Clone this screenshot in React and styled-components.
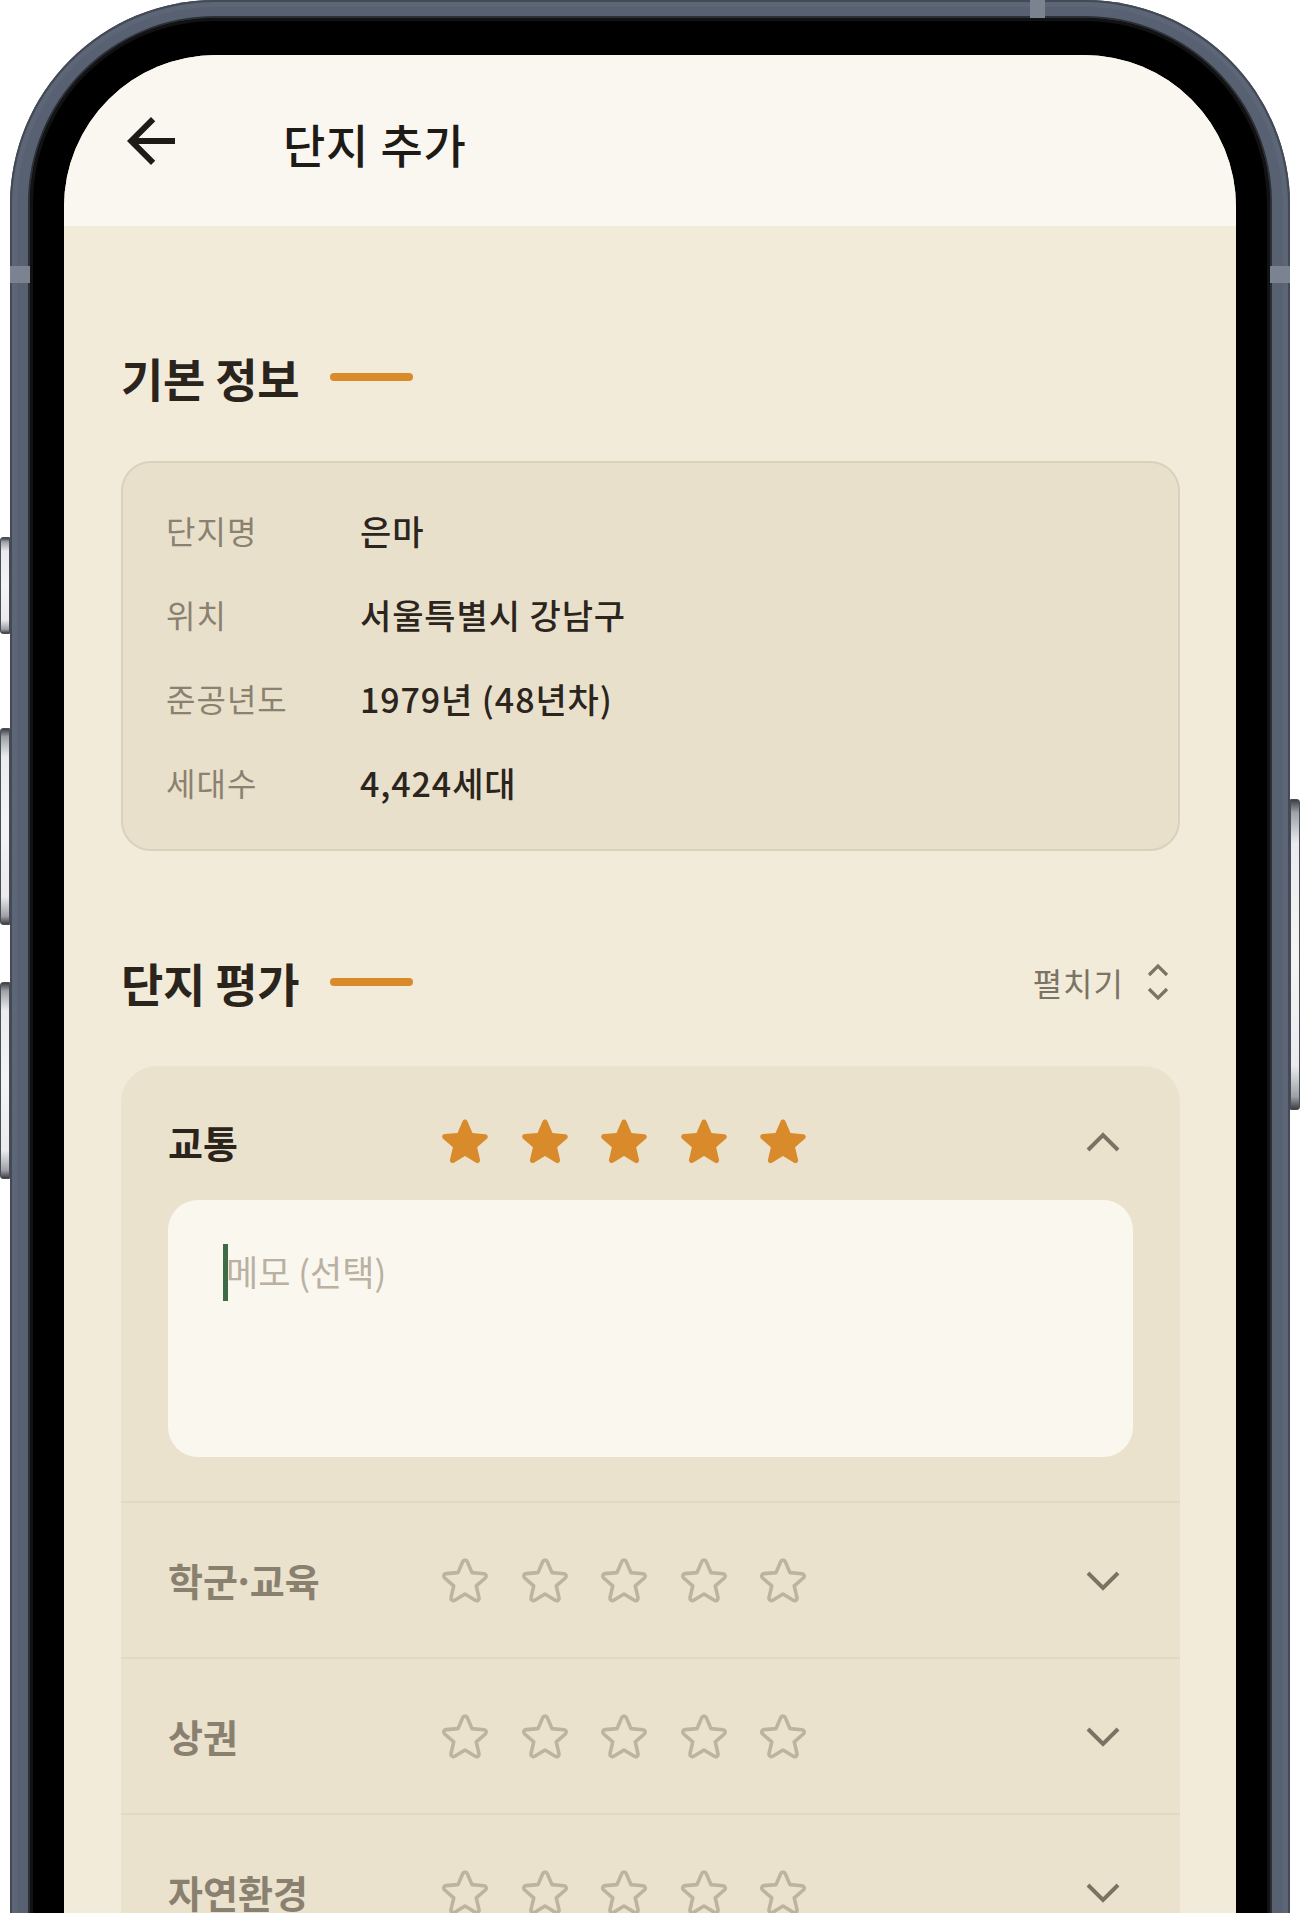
import React from "react";
import styled, { createGlobalStyle } from "styled-components";

const GlobalStyle = createGlobalStyle`
  html, body { margin: 0; padding: 0; background: #ffffff; }
  body { font-family: "Noto Sans CJK KR", "Noto Sans", sans-serif; overflow: hidden; }
  * { box-sizing: border-box; }
`;

const Stage = styled.div`
  position: relative;
  width: 1300px;
  height: 1913px;
  overflow: hidden;
  background: #ffffff;
`;

const SideButton = styled.div`
  position: absolute;
  width: 10px;
  top: ${(p) => p.$top}px;
  height: ${(p) => p.$height}px;
  ${(p) => (p.$right ? "right: 0;" : "left: 0;")}
  border: 1px solid #4a4d52;
  border-radius: ${(p) => (p.$right ? "0 3px 3px 0" : "3px 0 0 3px")};
  background: linear-gradient(
    to bottom,
    #3c4046 0%,
    #9da1a7 4%,
    #e9ebee 14%,
    #f3f4f6 50%,
    #e9ebee 86%,
    #9da1a7 96%,
    #3c4046 100%
  );
`;

const Phone = styled.div`
  position: relative;
  margin-left: 10px;
  width: 1280px;
  height: 2300px;
  padding: 18px 20px 0;
  border-radius: 205px 205px 0 0;
  background: #586171;
  box-shadow: inset 0 0 0 2px #434a56, inset 0 0 0 7px #5d6677;
`;

const Antenna = styled.div`
  position: absolute;
  background: #7b8391;
  ${(p) => p.$css}
`;

const Bezel = styled.div`
  height: 100%;
  padding: 37px 34px 0;
  background: #000;
  border-radius: 185px 185px 0 0;
  box-shadow: 0 0 0 2px #2b2f36, inset 0 0 0 3px #121212;
`;

const Screen = styled.div`
  height: 100%;
  background: #f2ebda;
  border-radius: 152px 152px 0 0;
  overflow: hidden;
  display: flex;
  flex-direction: column;
`;

const Header = styled.header`
  flex: 0 0 171px;
  display: flex;
  align-items: center;
  padding-left: 51px;
  background: #faf7f0;
`;

const BackButton = styled.button`
  display: flex;
  width: 72px;
  height: 72px;
  padding: 0;
  border: 0;
  background: none;
  color: #1e1a15;
`;

const Title = styled.h1`
  margin: 4px 0 0 96px;
  font-size: 46px;
  line-height: 60px;
  font-weight: 500;
  color: #1e1a15;
  letter-spacing: 0.8px;
`;

const Content = styled.main`
  display: flex;
  flex-direction: column;
  gap: 101px;
  padding: 121px 56px 0 57px;
`;

const Section = styled.section`
  display: flex;
  flex-direction: column;
  gap: 54px;
`;

const SectionHead = styled.div`
  display: flex;
  align-items: center;
  justify-content: space-between;
  height: 60px;
  padding-right: 10px;
`;

const SectionTitle = styled.div`
  display: flex;
  align-items: center;
  gap: 31px;
`;

const SectionText = styled.h2`
  margin: 0;
  font-size: 46px;
  line-height: 60px;
  font-weight: 700;
  color: #2a241d;
  letter-spacing: -0.3px;
`;

const AccentBar = styled.span`
  width: 83px;
  height: 8px;
  border-radius: 4px;
  background: #d98b2c;
`;

const ExpandToggle = styled.button`
  display: flex;
  align-items: center;
  gap: 22px;
  padding: 0;
  border: 0;
  background: none;
  font-family: inherit;
  font-size: 32px;
  line-height: 44px;
  letter-spacing: 1px;
  color: #7b7363;
`;

const InfoCard = styled.div`
  padding: 25px 43px;
  border: 2px solid #dbd0bb;
  border-radius: 30px;
  background: #e9e0cc;
`;

const InfoRow = styled.div`
  display: grid;
  grid-template-columns: 194px 1fr;
  align-items: center;
  height: 84px;
`;

const InfoLabel = styled.span`
  font-size: 32px;
  color: #8b8170;
  font-weight: 400;
  letter-spacing: 1px;
`;

const InfoValue = styled.span`
  font-size: 34px;
  color: #2b251d;
  font-weight: 500;
  letter-spacing: 0.9px;
`;

const EvalCard = styled.div`
  border-radius: 36px;
  background: #ebe2ce;
`;

const EvalItem = styled.div`
  padding: 0 47px ${(p) => (p.$open ? "44px" : "0")};
  border-top: ${(p) => (p.$first ? "0" : "2px solid #e2d8c3")};
`;

const EvalHead = styled.div`
  display: grid;
  grid-template-columns: 265px 1fr auto;
  align-items: center;
  padding: ${(p) => (p.$open ? "44px 0 26px" : "45px 0")};
`;

const EvalLabel = styled.span`
  font-size: 38px;
  line-height: 64px;
  font-weight: 700;
  white-space: nowrap;
  color: ${(p) => (p.$active ? "#2a241c" : "#8a806f")};
`;

const Dot = styled.span`
  display: inline-block;
  margin: 0 -0.14em;
`;

const Stars = styled.div`
  display: flex;
  gap: 15.5px;
`;

const StarIcon = styled.svg`
  width: 64px;
  height: 64px;
  display: block;
`;

const Chevron = styled.svg`
  width: 44px;
  height: 44px;
  margin-right: 8px;
  display: block;
`;

const Memo = styled.div`
  position: relative;
  height: 257px;
  padding: 42px 58px;
  border-radius: 30px;
  background: #faf7ef;
  font-size: 35px;
  line-height: 57px;
  color: #b9b1a2;
`;

const Caret = styled.span`
  position: absolute;
  left: 55px;
  top: 44px;
  width: 5px;
  height: 57px;
  background: #3f6a46;
`;

const STAR_PATH =
  "M12 17.27l4.15 2.51c.76.46 1.69-.22 1.49-1.08l-1.1-4.72 3.67-3.18c.67-.58.31-1.68-.57-1.75l-4.83-.41-1.89-4.46c-.34-.81-1.5-.81-1.840 0L9.19 8.63l-4.83.41c-.88.07-1.24 1.17-.57 1.75l3.67 3.18-1.1 4.72c-.2.86.73 1.54 1.49 1.08l4.15-2.5z";

function Star({ filled }) {
  return (
    <StarIcon viewBox="0 0 24 24">
      {filled ? (
        <path d={STAR_PATH} fill="#d98b2c" />
      ) : (
        <path
          d={STAR_PATH}
          fill="none"
          stroke="#bdb4a0"
          strokeWidth="1.45"
          strokeLinejoin="round"
          transform="translate(12 12) scale(0.93) translate(-12 -11.6)"
        />
      )}
    </StarIcon>
  );
}

function ChevronIcon({ up }) {
  return (
    <Chevron viewBox="0 0 44 44">
      <polyline
        points={up ? "7,30 22,15 37,30" : "7,15 22,30 37,15"}
        fill="none"
        stroke="#7a7262"
        strokeWidth="4"
      />
    </Chevron>
  );
}

function UpDownIcon() {
  return (
    <svg width="24" height="44" viewBox="0 0 24 44">
      <g fill="none" stroke="#7b7363" strokeWidth="3.2">
        <polyline points="3,15 12,6 21,15" />
        <polyline points="3,29 12,38 21,29" />
      </g>
    </svg>
  );
}

function LabelText({ text }) {
  const parts = text.split("·");
  if (parts.length === 1) return text;
  return (
    <>
      {parts[0]}
      <Dot>·</Dot>
      {parts[1]}
    </>
  );
}

const info = [
  ["단지명", "은마"],
  ["위치", "서울특별시 강남구"],
  ["준공년도", "1979년 (48년차)"],
  ["세대수", "4,424세대"],
];

const evals = [
  { label: "교통", score: 5, open: true },
  { label: "학군·교육", score: 0 },
  { label: "상권", score: 0 },
  { label: "자연환경", score: 0 },
  { label: "편의시설", score: 0 },
];

export default function App() {
  return (
    <Stage>
      <GlobalStyle />
      <SideButton $top={537} $height={97} />
      <SideButton $top={728} $height={197} />
      <SideButton $top={982} $height={197} />
      <SideButton $right $top={799} $height={311} />
      <Phone>
        <Antenna $css="left: 1020px; top: 0; width: 15px; height: 18px;" />
        <Antenna $css="left: 0; top: 266px; width: 20px; height: 17px;" />
        <Antenna $css="right: 0; top: 266px; width: 20px; height: 17px;" />
        <Bezel>
          <Screen>
            <Header>
              <BackButton aria-label="뒤로">
                <svg width="72" height="72" viewBox="0 0 24 24">
                  <path
                    fill="currentColor"
                    d="M20 11H7.83l5.59-5.59L12 4l-8 8 8 8 1.41-1.41L7.83 13H20v-2z"
                  />
                </svg>
              </BackButton>
              <Title>단지 추가</Title>
            </Header>
            <Content>
              <Section>
                <SectionHead>
                  <SectionTitle>
                    <SectionText>기본 정보</SectionText>
                    <AccentBar />
                  </SectionTitle>
                </SectionHead>
                <InfoCard>
                  {info.map(([k, v]) => (
                    <InfoRow key={k}>
                      <InfoLabel>{k}</InfoLabel>
                      <InfoValue>{v}</InfoValue>
                    </InfoRow>
                  ))}
                </InfoCard>
              </Section>
              <Section>
                <SectionHead>
                  <SectionTitle>
                    <SectionText>단지 평가</SectionText>
                    <AccentBar />
                  </SectionTitle>
                  <ExpandToggle>
                    펼치기
                    <UpDownIcon />
                  </ExpandToggle>
                </SectionHead>
                <EvalCard>
                  {evals.map((e, i) => (
                    <EvalItem key={e.label} $first={i === 0} $open={e.open}>
                      <EvalHead $open={e.open}>
                        <EvalLabel $active={e.open}>
                          <LabelText text={e.label} />
                        </EvalLabel>
                        <Stars>
                          {[1, 2, 3, 4, 5].map((n) => (
                            <Star key={n} filled={n <= e.score} />
                          ))}
                        </Stars>
                        <ChevronIcon up={e.open} />
                      </EvalHead>
                      {e.open && (
                        <Memo>
                          <Caret />
                          메모 (선택)
                        </Memo>
                      )}
                    </EvalItem>
                  ))}
                </EvalCard>
              </Section>
            </Content>
          </Screen>
        </Bezel>
      </Phone>
    </Stage>
  );
}
